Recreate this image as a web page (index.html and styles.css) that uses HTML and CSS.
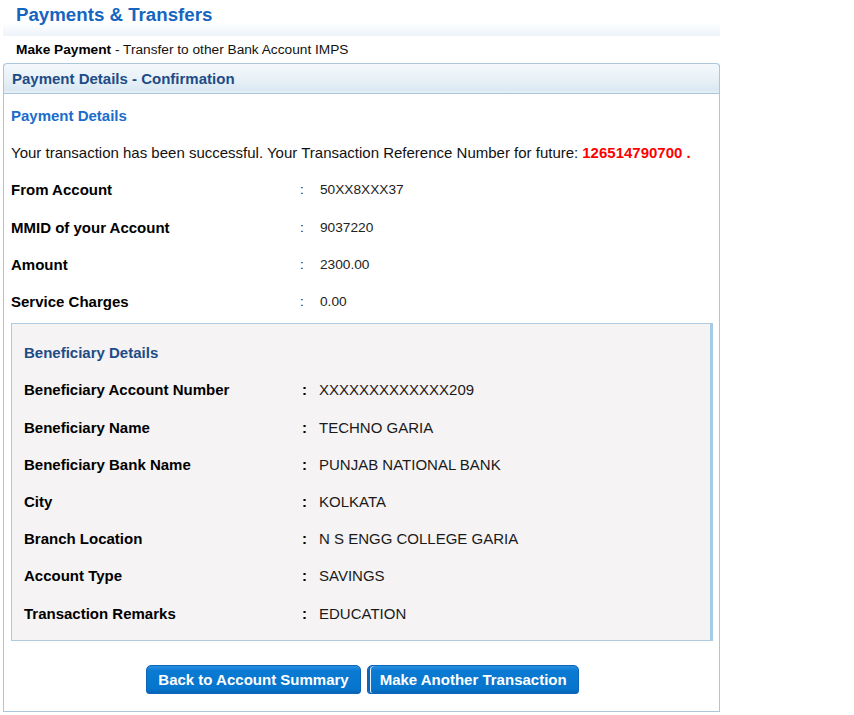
FILE: index.html
```html
<!DOCTYPE html>
<html>
<head>
<meta charset="utf-8">
<link rel="stylesheet" href="styles.css">
</head>
<body>
<div class="page">
  <div class="title-band"><h1 class="title">Payments &amp; Transfers</h1></div>
  <div class="crumb"><b>Make Payment</b> - Transfer to other Bank Account IMPS</div>
  <div class="panel">
    <div class="panel-head">Payment Details - Confirmation</div>
    <div class="panel-body">
      <div class="row"><span class="section-title">Payment Details</span></div>
      <div class="row msg">Your transaction has been successful. Your Transaction Reference Number for future: <span class="ref">126514790700 .</span></div>
      <div class="row kv"><span class="label">From Account</span><span class="colon">:</span><span class="val">50XX8XXX37</span></div>
      <div class="row kv"><span class="label">MMID of your Account</span><span class="colon">:</span><span class="val">9037220</span></div>
      <div class="row kv"><span class="label">Amount</span><span class="colon">:</span><span class="val">2300.00</span></div>
      <div class="row kv"><span class="label">Service Charges</span><span class="colon">:</span><span class="val">0.00</span></div>

      <div class="bene">
        <div class="row"><span class="bene-title">Beneficiary Details</span></div>
        <div class="row bkv"><span class="label">Beneficiary Account Number</span><span class="colon">:</span><span class="val">XXXXXXXXXXXXX209</span></div>
        <div class="row bkv"><span class="label">Beneficiary Name</span><span class="colon">:</span><span class="val">TECHNO GARIA</span></div>
        <div class="row bkv"><span class="label">Beneficiary Bank Name</span><span class="colon">:</span><span class="val">PUNJAB NATIONAL BANK</span></div>
        <div class="row bkv"><span class="label">City</span><span class="colon">:</span><span class="val">KOLKATA</span></div>
        <div class="row bkv"><span class="label">Branch Location</span><span class="colon">:</span><span class="val">N S ENGG COLLEGE GARIA</span></div>
        <div class="row bkv"><span class="label">Account Type</span><span class="colon">:</span><span class="val">SAVINGS</span></div>
        <div class="row bkv"><span class="label">Transaction Remarks</span><span class="colon">:</span><span class="val">EDUCATION</span></div>
      </div>

      <div class="actions">
        <button class="btn">Back to Account Summary</button>
        <button class="btn btn-alt">Make Another Transaction</button>
      </div>
    </div>
  </div>
</div>
</body>
</html>
```

FILE: styles.css
```css
* { box-sizing: border-box; }
html, body { margin: 0; padding: 0; background: #fff; }
body {
  font-family: "Liberation Sans", Arial, sans-serif;
  color: #000;
  width: 854px;
  height: 715px;
  overflow: hidden;
}
.page { width: 720px; padding-left: 3px; }

.title-band {
  height: 36px;
  background: linear-gradient(to bottom, #ffffff 0%, #ffffff 62%, #edf3fa 100%);
}
.title {
  margin: 0;
  padding: 4px 0 0 13px;
  font-size: 18.7px;
  line-height: 22px;
  font-weight: bold;
  color: #1565c0;
}
.crumb {
  height: 27px;
  line-height: 27px;
  padding-left: 13px;
  font-size: 13.7px;
  color: #111;
}
.crumb b { color: #000; }

.panel {
  width: 717px;
  height: 649px;
  border: 1px solid #a9c6dc;
  border-top: none;
  border-radius: 4px 4px 0 0;
}
.panel-head {
  height: 31px;
  line-height: 30px;
  padding-left: 8px;
  font-size: 15px;
  font-weight: bold;
  color: #1d4c86;
  border: 1px solid #a9c6dc;
  margin: 0 -1px;
  border-radius: 4px 4px 0 0;
  background: linear-gradient(to bottom, #f4f8fb 0%, #eaf2f8 45%, #d8e7f1 100%);
  box-shadow: inset 0 -2px 0 #e4eef5;
}
.panel-body { padding: 3px 5px 0 7px; }

.row {
  height: 37.2px;
  display: flex;
  align-items: center;
  font-size: 15px;
}
.section-title { font-weight: bold; color: #1a6dcc; font-size: 15px; }
.msg { color: #111; white-space: nowrap; }
.ref { color: #ff0000; font-weight: bold; margin-left: 4px; }

.kv .label { width: 289px; font-weight: bold; }
.kv .colon { width: 20px; font-size: 13.7px; color: #222; }
.kv .val { font-size: 13.7px; color: #222; }

.bene {
  margin-top: 3px;
  width: 702px;
  height: 318px;
  background: #f5f3f4;
  border: 1px solid #aecbe0;
  border-right: 3px solid #a6cbe6;
  padding: 10px 0 0 12px;
}
.bene-title { font-weight: bold; color: #1d4c86; font-size: 15px; }
.bkv .label { width: 278px; font-weight: bold; }
.bkv .colon { width: 17px; font-weight: bold; font-size: 15px; }
.bkv .val { font-size: 15px; color: #1a1a1a; }

.actions {
  display: flex;
  justify-content: center;
  gap: 6px;
  margin-top: 24px;
}
.btn {
  height: 29px;
  padding: 0 11.5px;
  font-family: "Liberation Sans", Arial, sans-serif;
  font-size: 15px;
  font-weight: bold;
  color: #fff;
  background: linear-gradient(to bottom, #2a8fe0 0%, #0b7ad3 18%, #0675cd 85%, #0862b4 100%);
  border: 1px solid #0b65b8;
  border-radius: 5px 5px 3px 3px;
  cursor: pointer;
}
.btn-alt { box-shadow: inset 2px 0 0 #0b65b8, inset 3px 0 0 #e8f2fb; }
```
